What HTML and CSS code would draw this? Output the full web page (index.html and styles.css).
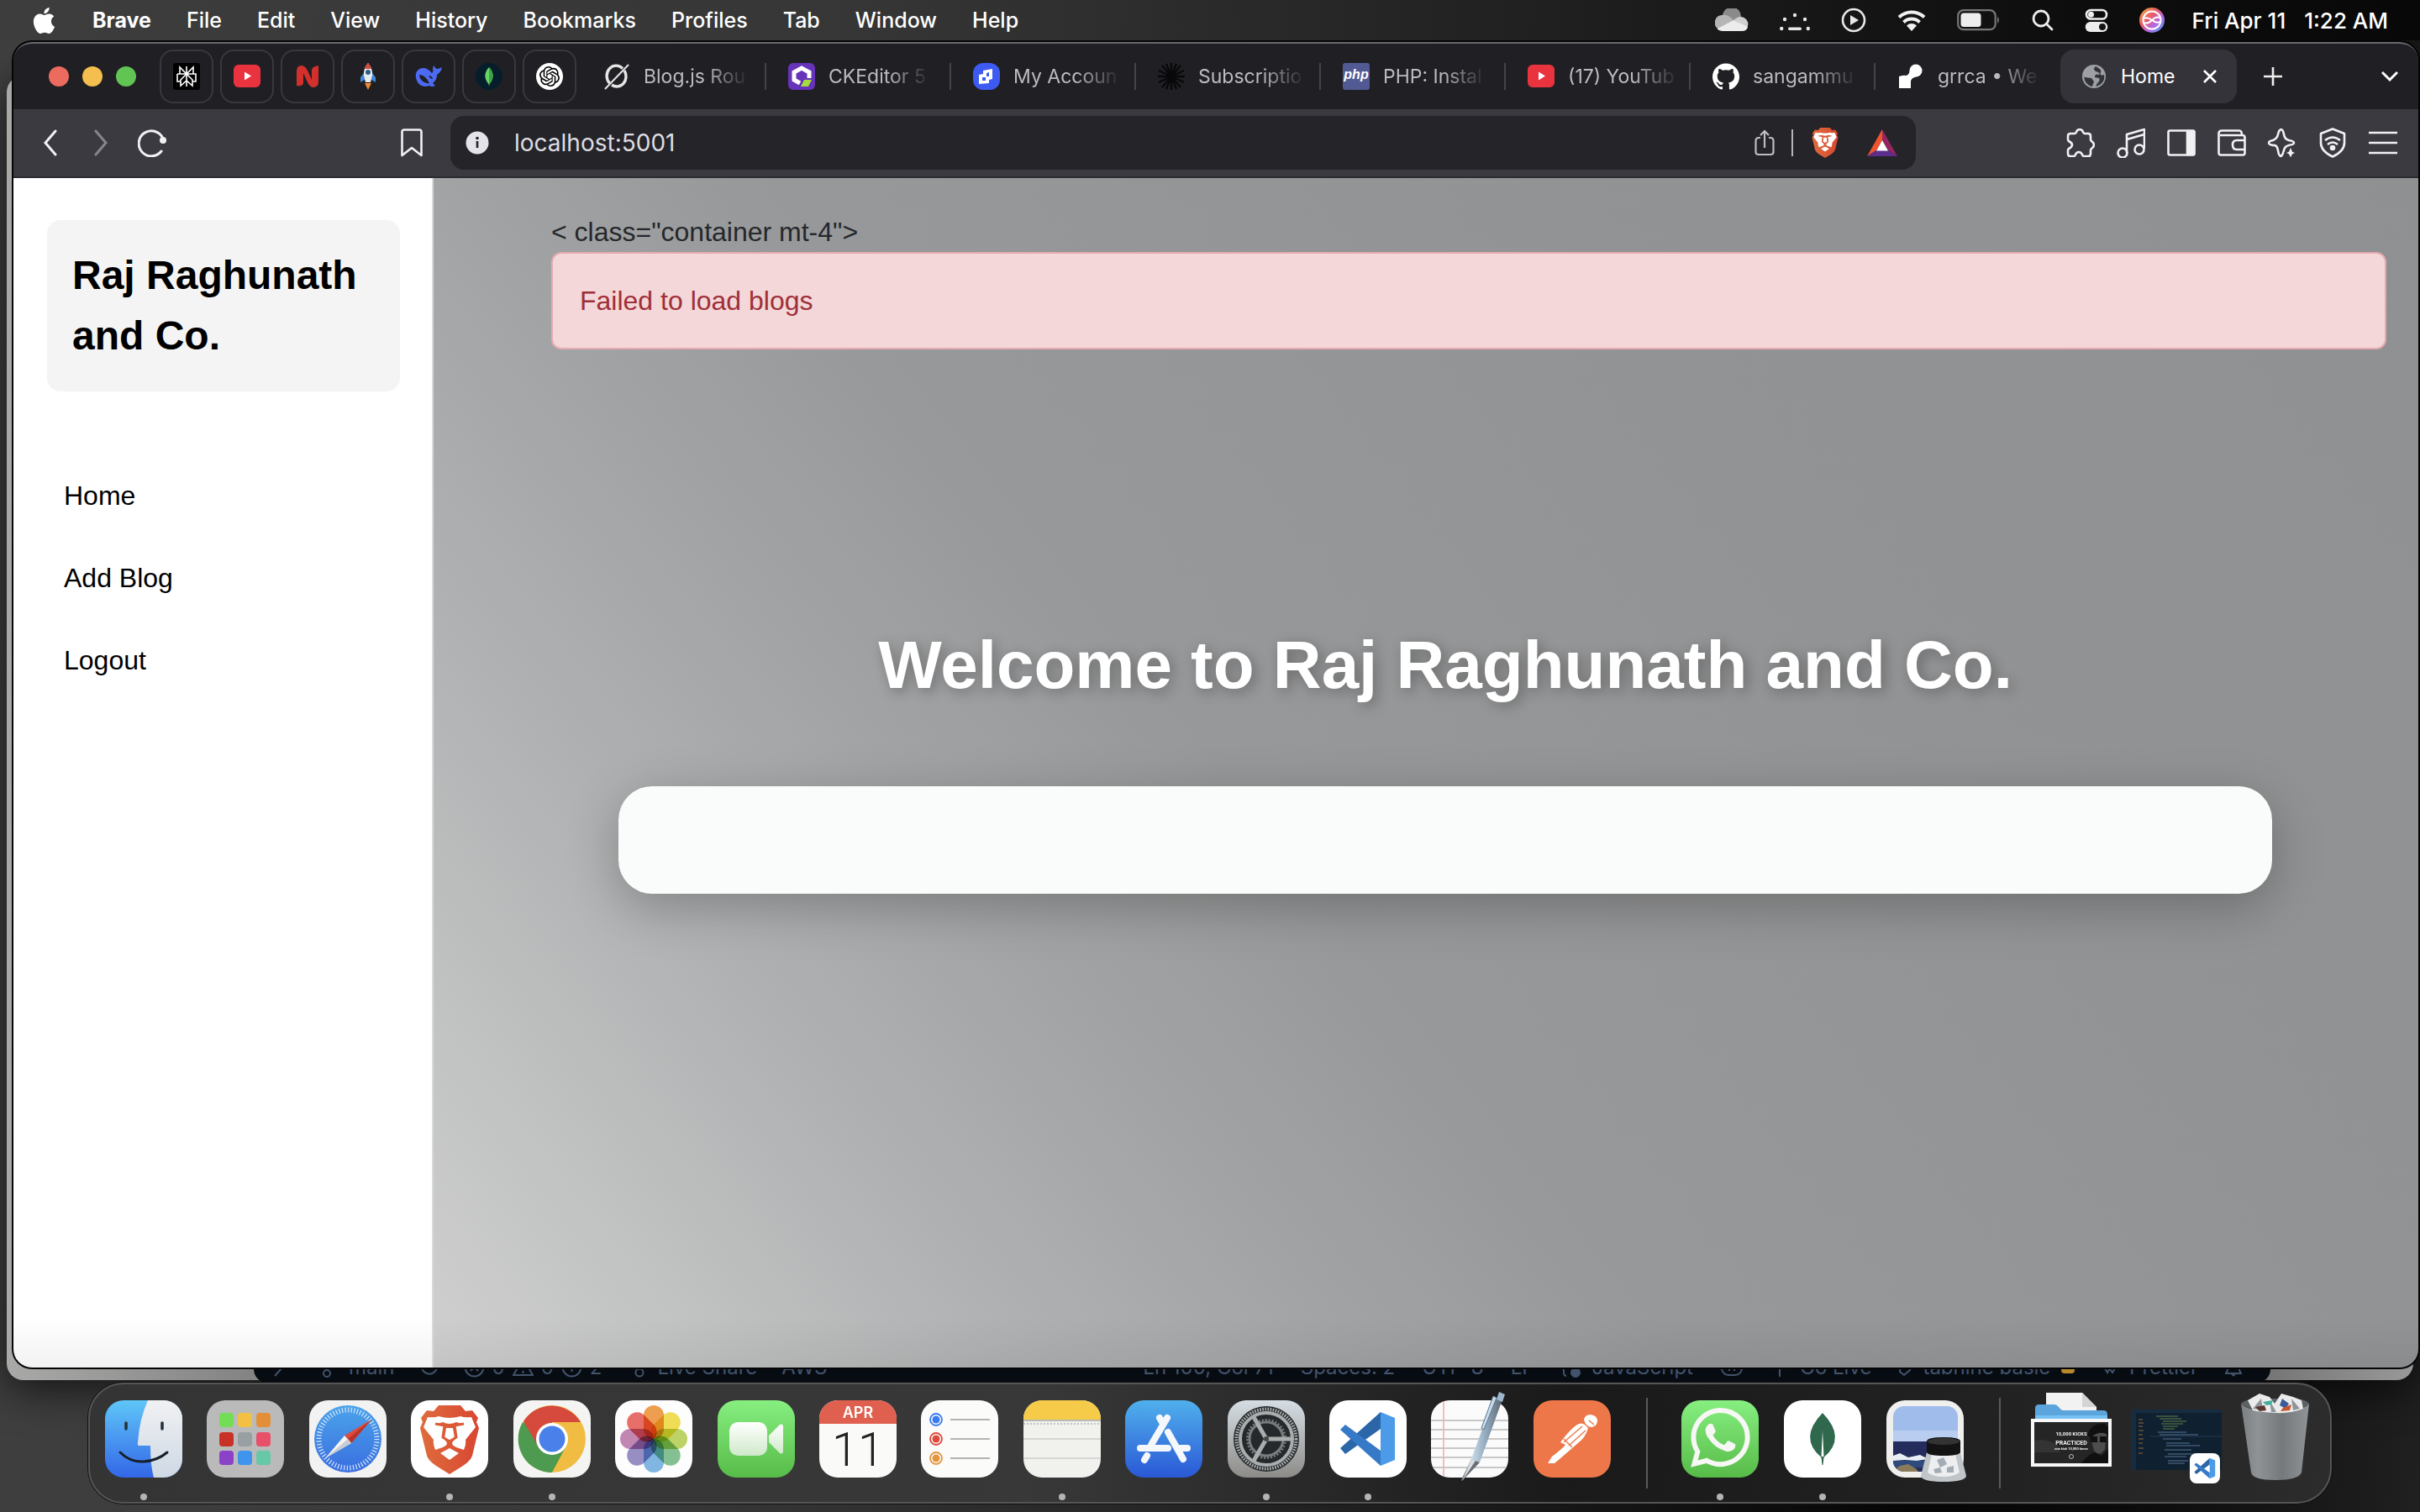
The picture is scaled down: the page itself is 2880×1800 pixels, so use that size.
FILE: index.html
```html
<!DOCTYPE html>
<html lang="en">
<head>
<meta charset="utf-8">
<title>Home</title>
<link rel="stylesheet" href="styles.css">
</head>
<body>
<svg class="defs" width="0" height="0" aria-hidden="true">
  <defs>
    <linearGradient id="g-blue" x1="0" y1="0" x2="0" y2="1"><stop offset="0" stop-color="#5fc6f8"/><stop offset="1" stop-color="#3367e8"/></linearGradient>
    <linearGradient id="g-pale" x1="0" y1="0" x2="0" y2="1"><stop offset="0" stop-color="#f1f1f4"/><stop offset="1" stop-color="#ced8e4"/></linearGradient>
    <linearGradient id="g-safari" x1="0" y1="0" x2="0" y2="1"><stop offset="0" stop-color="#4ba3ea"/><stop offset="1" stop-color="#3a6ee0"/></linearGradient>
    <linearGradient id="g-lion" x1="0" y1="0" x2="1" y2="0"><stop offset="0" stop-color="#de6c3c"/><stop offset=".5" stop-color="#dc5a37"/><stop offset="1" stop-color="#d84632"/></linearGradient>
    <linearGradient id="g-cam" x1="0" y1="0" x2="0" y2="1"><stop offset="0" stop-color="#ffffff"/><stop offset="1" stop-color="#cfe9ca"/></linearGradient>
    <linearGradient id="g-trash" x1="0" y1="0" x2="1" y2="0"><stop offset="0" stop-color="#7b8083"/><stop offset=".25" stop-color="#8f9396"/><stop offset=".6" stop-color="#75797c"/><stop offset="1" stop-color="#909497"/></linearGradient>
    <linearGradient id="g-siri" x1="0" y1="0" x2="1" y2="1"><stop offset="0" stop-color="#f3b13c"/><stop offset=".4" stop-color="#ea5a6a"/><stop offset=".65" stop-color="#b467e6"/><stop offset="1" stop-color="#3ea6ef"/></linearGradient>
    <linearGradient id="g-pen" x1="0" y1="0" x2="1" y2="0"><stop offset="0" stop-color="#c9dcea"/><stop offset=".5" stop-color="#8ea6ba"/><stop offset="1" stop-color="#5b6670"/></linearGradient>
    <symbol id="lion" viewBox="10 4 72 86">
      <path fill="url(#g-lion)" d="M33 6H59L65 13 73 12 80 21 78 26 81 33 73 66Q71 72 62 78L46 88 30 78Q21 72 19 66L11 33 14 26 12 21 19 12 27 13Z"/>
      <path fill="#fff" d="M20 20Q28 21 33 19Q46 23 59 19Q64 21 72 20L77 32 65 47Q66 52 63 59L54 56Q47 53 50 49L54 45 52 31 60 28 54 26Q46 30 38 26L32 28 40 31 38 45 42 49Q45 53 38 56L29 59Q26 52 27 47L15 32Z"/>
      <path fill="#fff" d="M42 33H50L52 45 46 48 40 45ZM46 57L57 63 46 71 35 63Z"/>
      <path fill="none" stroke="#dc5a37" stroke-width="3" d="M29 28L40 30 38 44 46 49 54 44 52 30 63 28M46 49V55"/>
    </symbol>
    <symbol id="vscode" viewBox="12 12 68 68">
      <path fill="#2a66a8" d="M13 57L61 14V34L19 64Z"/>
      <path fill="#3679c6" d="M13 35L19 29 61 60V78L13 35Z"/>
      <path fill="#4c9be8" d="M61 14L78 21V71L61 78Z"/>
    </symbol>
    <symbol id="youtube" viewBox="0 0 32 28">
      <rect width="32" height="27" rx="6" fill="#e9333f"/><path fill="#fff" d="M13 8.500L21 13.500 13 18.500Z"/>
    </symbol>
  </defs>
</svg>

<div class="desktop">
  <div class="back-window" aria-hidden="true"></div>

  <header class="menubar">
    <nav class="menus" aria-label="Menu bar">
      <button class="menu" aria-label="Apple menu"><svg width="31" height="31" viewBox="0 0 24 24"><path fill="#fff" d="M12.152 6.896c-.948 0-2.415-1.078-3.96-1.04-2.04.027-3.91 1.183-4.961 3.014-2.117 3.675-.546 9.103 1.519 12.09 1.013 1.454 2.208 3.09 3.792 3.039 1.52-.065 2.09-.987 3.935-.987 1.831 0 2.35.987 3.96.948 1.637-.026 2.676-1.48 3.676-2.948 1.156-1.688 1.636-3.325 1.662-3.415-.039-.013-3.182-1.221-3.22-4.857-.026-3.04 2.48-4.494 2.597-4.559-1.429-2.09-3.623-2.324-4.39-2.376-2-.156-3.675 1.09-4.61 1.09zM15.53 3.83c.843-1.012 1.4-2.427 1.245-3.83-1.207.052-2.662.805-3.532 1.818-.78.896-1.454 2.338-1.273 3.714 1.338.104 2.715-.688 3.559-1.701"/></svg></button>
      <button class="menu menu-app">Brave</button>
      <button class="menu">File</button>
      <button class="menu">Edit</button>
      <button class="menu">View</button>
      <button class="menu">History</button>
      <button class="menu">Bookmarks</button>
      <button class="menu">Profiles</button>
      <button class="menu">Tab</button>
      <button class="menu">Window</button>
      <button class="menu">Help</button>
    </nav>
    <div class="status">
      <svg width="40" height="28" viewBox="0 0 40 28"><path fill="#8a8a8a" d="M9 9A11 11 0 0 1 31 10L20 18Z"/><path fill="#b5b5b5" d="M2 23A9 9 0 0 1 8 8Q14 6 22 14L4 26Z"/><path fill="#cfcfcf" d="M22 14Q30 7 36 12A8 8 0 0 1 38 23Z"/><path fill="#ececec" d="M3 24L22 14 39 22Q38 27 32 27H9Q5 27 3 24Z"/></svg>
      <svg width="36" height="28" viewBox="0 0 36 28" fill="#e8e8e8"><circle cx="18" cy="8" r="2.200"/><circle cx="6" cy="13" r="2.200"/><circle cx="30" cy="13" r="2.200"/><circle cx="2.200" cy="24" r="2.200"/><circle cx="33.800" cy="24" r="2.200"/><rect x="10" y="22.500" width="16" height="3.500" rx="1.700"/></svg>
      <svg width="30" height="30" viewBox="0 0 30 30"><circle cx="15" cy="15" r="13" fill="none" stroke="#e8e8e8" stroke-width="2.600"/><path fill="#e8e8e8" d="M11 9L21 15 11 21Z"/></svg>
      <svg width="34" height="26" viewBox="0 0 34 26" fill="none" stroke="#f0f0f0" stroke-width="4"><path d="M2 9.500A21.500 21.500 0 0 1 32 9.500M7.500 15.500A13.500 13.500 0 0 1 26.500 15.500"/><path fill="#f0f0f0" stroke="none" d="M17 26L11 19.500A8.500 8.500 0 0 1 23 19.500Z"/></svg>
      <svg width="52" height="26" viewBox="0 0 52 26"><rect x="1.200" y="1.200" width="44.500" height="23" rx="6.500" fill="none" stroke="#777" stroke-width="2.200"/><rect x="4.500" y="4.500" width="24" height="16.500" rx="3.500" fill="#eee"/><path fill="#777" d="M48 9Q52 12.500 48 17Z"/></svg>
      <svg width="26" height="26" viewBox="0 0 26 26" fill="none" stroke="#eee" stroke-width="2.800" stroke-linecap="round"><circle cx="11" cy="11" r="9"/><path d="M17.500 17.500L24 24"/></svg>
      <svg width="28" height="28" viewBox="0 0 28 28"><rect x="2" y="2" width="24" height="10.500" rx="5.200" fill="none" stroke="#eee" stroke-width="2.600"/><circle cx="7.500" cy="7.200" r="3.500" fill="#eee"/><rect x=".7" y="16" width="26.600" height="12" rx="6" fill="#eee"/><circle cx="21" cy="22" r="4" fill="#151515"/></svg>
      <svg width="30" height="30" viewBox="0 0 30 30"><circle cx="15" cy="15" r="15" fill="url(#g-siri)"/><circle cx="15" cy="15" r="10.500" fill="none" stroke="#fff" stroke-width="2"/><path fill="none" stroke="#fff" stroke-width="2" d="M5 13Q10 11 15 15T25 17M5 18Q10 20 15 15T24 12"/></svg>
      <time class="clock"><span>Fri Apr 11</span><span>1:22 AM</span></time>
    </div>
  </header>

  <div class="browser">
    <div class="tabstrip">
      <div class="lights">
        <button class="light light-close" aria-label="Close"></button>
        <button class="light light-min" aria-label="Minimize"></button>
        <button class="light light-max" aria-label="Zoom"></button>
      </div>
      <div class="pinned">
        <button class="pin" aria-label="Perplexity"><svg width="32" height="32" viewBox="0 0 32 32"><rect width="32" height="32" rx="3" fill="#000"/><path fill="none" stroke="#fff" stroke-width="1.600" d="M16 4V28M8 5L16 13 24 5V13H8ZM5 13H27V22H23M5 13V22H9M16 13L9 20V27L16 21 23 27V20L16 13"/></svg></button>
        <button class="pin" aria-label="YouTube"><svg width="32" height="28"><use href="#youtube"/></svg></button>
        <button class="pin" aria-label="Novel"><svg width="28" height="28" viewBox="0 0 28 28"><path fill="#d3302c" d="M1 25V8Q1 1 7 1Q11 1 14 7L19 18V6Q20 2 27 1V20Q27 27 21 27Q17 27 14 21L9 10V22Q8 26 1 25Z"/></svg></button>
        <button class="pin" aria-label="Rocket"><svg width="20" height="32" viewBox="0 0 20 32"><path fill="#3f8ad8" d="M5 12L1 17V23L6 20ZM15 12L19 17V23L14 20Z"/><path fill="#e6ebee" d="M10 0Q16 7 15 15L13 23H7L5 15Q4 7 10 0Z"/><path fill="#d64a3b" d="M10 0Q13 3 14 7H6Q7 3 10 0Z"/><circle cx="10" cy="11" r="3" fill="#2f5d86"/><path fill="#f08b33" d="M6 24H14L10 32Z"/></svg></button>
        <button class="pin" aria-label="DeepSeek"><svg width="32" height="26" viewBox="0 0 32 26"><path fill="#4d6bf2" d="M1 9Q4 2 11 3Q16 4 20 9Q22 8 21 4Q21 1 23 0Q23 3 26 4Q29 4 32 2Q31 8 26 11Q26 17 21 21L24 24Q20 26 17 24Q8 27 3 20Q0 15 1 9Z"/><path fill="#201f24" d="M5 11Q12 11 17 21Q12 22 8 18Q5 15 5 11ZM16 12Q20 12 21 16Q18 16 16 12Z"/></svg></button>
        <button class="pin" aria-label="MongoDB"><svg width="32" height="32" viewBox="0 0 32 32"><circle cx="16" cy="16" r="16" fill="#061e2b"/><path fill="#63d964" d="M16 5Q25 15 16.500 25L16 28 15.500 25Q7 15 16 5Z"/><path fill="#42a147" d="M16 5Q25 15 16 25Z"/></svg></button>
        <button class="pin" aria-label="ChatGPT"><svg width="32" height="32" viewBox="-4 -4 32 32"><circle cx="12" cy="12" r="16" fill="#fff"/><path d="M22.282 9.821a5.985 5.985 0 0 0-.516-4.910 6.046 6.046 0 0 0-6.510-2.900A6.065 6.065 0 0 0 4.981 4.182a5.985 5.985 0 0 0-3.998 2.900 6.046 6.046 0 0 0 .743 7.097 5.980 5.980 0 0 0 .511 4.911 6.051 6.051 0 0 0 6.515 2.900A5.985 5.985 0 0 0 13.260 24a6.056 6.056 0 0 0 5.772-4.206 5.989 5.989 0 0 0 3.998-2.900 6.056 6.056 0 0 0-.748-7.073zm-9.022 12.608a4.476 4.476 0 0 1-2.876-1.041l.142-.08 4.778-2.758a.795.795 0 0 0 .393-.681v-6.737l2.020 1.169a.071.071 0 0 1 .038.052v5.583a4.504 4.504 0 0 1-4.495 4.494zm-9.661-4.125a4.471 4.471 0 0 1-.535-3.014l.142.085 4.783 2.758a.771.771 0 0 0 .781 0l5.843-3.369v2.332a.08.08 0 0 1-.033.062L9.740 19.950a4.499 4.499 0 0 1-6.141-1.646zM2.341 7.896a4.485 4.485 0 0 1 2.366-1.973V11.600a.766.766 0 0 0 .388.677l5.814 3.354-2.020 1.169a.076.076 0 0 1-.071 0l-4.830-2.787A4.504 4.504 0 0 1 2.341 7.872zm16.596 3.856L13.104 8.364 15.119 7.200a.076.076 0 0 1 .071 0l4.830 2.791a4.494 4.494 0 0 1-.677 8.104v-5.677a.790.790 0 0 0-.407-.667zm2.011-3.023l-.142-.085-4.774-2.782a.776.776 0 0 0-.785 0L9.409 9.230V6.897a.066.066 0 0 1 .028-.062l4.830-2.787a4.499 4.499 0 0 1 6.680 4.660zM8.307 12.863l-2.020-1.164a.08.08 0 0 1-.038-.057V6.074a4.499 4.499 0 0 1 7.376-3.454l-.142.081L8.704 5.459a.795.795 0 0 0-.393.681zm1.098-2.365l2.602-1.500 2.607 1.500v2.999l-2.597 1.500-2.607-1.500Z"/></svg></button>
      </div>
      <div class="tabs">
        <button class="tab"><svg width="32" height="32" viewBox="0 0 32 32"><path fill="none" stroke="#e6e6e6" stroke-width="3.400" d="M23 6.500A11 12 0 0 0 7.500 24M10 26A11 12 0 0 0 25 9"/><path stroke="#e6e6e6" stroke-width="2" d="M30 2L2 31"/></svg><span class="tab-title">Blog.js Rou</span></button>
        <button class="tab"><svg width="32" height="32" viewBox="0 0 32 32"><rect width="32" height="32" rx="6" fill="#6633b9"/><path fill="none" stroke="#fff" stroke-width="5" d="M14 24L7 20V11L16 6 25 11V18"/><path fill="#a5dc3d" d="M19 20H28L24 28H15Z"/></svg><span class="tab-title">CKEditor 5</span></button>
        <button class="tab"><svg width="32" height="32" viewBox="0 0 32 32"><rect width="32" height="32" rx="12" fill="#3d5bf2"/><path fill="#fff" d="M12 9L23 7V19L19 20V24L7 25V14L12 13ZM16 12V16H19V11ZM11 17V21H15V17Z" fill-rule="evenodd"/></svg><span class="tab-title">My Accoun</span></button>
        <button class="tab"><svg width="32" height="32" viewBox="0 0 32 32"><path fill="none" stroke="#08080a" stroke-width="2.400" d="M16 0V32M0 16H32M5 3L16 16 27 3M5 29L16 16 27 29M1 9L16 16 31 9M1 23L16 16 31 23M10 1L16 16 22 1M10 31L16 16 22 31"/></svg><span class="tab-title">Subscriptio</span></button>
        <button class="tab"><span class="php-badge" aria-hidden="true">php</span><span class="tab-title">PHP: Instal</span></button>
        <button class="tab"><svg width="32" height="28"><use href="#youtube"/></svg><span class="tab-title">(17) YouTub</span></button>
        <button class="tab"><svg width="32" height="32" viewBox="0 0 24 24"><path fill="#fff" d="M12 .297c-6.630 0-12 5.373-12 12 0 5.303 3.438 9.800 8.205 11.385.6.113.82-.258.82-.577 0-.285-.01-1.040-.015-2.040-3.338.724-4.042-1.610-4.042-1.610C4.422 18.070 3.633 17.700 3.633 17.700c-1.087-.744.084-.729.084-.729 1.205.084 1.838 1.236 1.838 1.236 1.070 1.835 2.809 1.305 3.495.998.108-.776.417-1.305.76-1.605-2.665-.3-5.466-1.332-5.466-5.930 0-1.310.465-2.380 1.235-3.220-.135-.303-.54-1.523.105-3.176 0 0 1.005-.322 3.300 1.230.96-.267 1.980-.399 3-.405 1.020.006 2.040.138 3 .405 2.280-1.552 3.285-1.230 3.285-1.230.645 1.653.24 2.873.12 3.176.765.84 1.230 1.910 1.230 3.220 0 4.610-2.805 5.625-5.475 5.920.42.36.81 1.096.81 2.220 0 1.606-.015 2.896-.015 3.286 0 .315.21.69.825.57C20.565 22.092 24 17.592 24 12.297c0-6.627-5.373-12-12-12"/></svg><span class="tab-title">sangammu</span></button>
        <button class="tab"><svg width="32" height="32" viewBox="0 0 32 32"><circle cx="22" cy="9" r="7.500" fill="#fff"/><path fill="#fff" d="M2 16Q8 14 10 15Q14 15 15 8L23 16Q16 18 16 22V30H2Z"/></svg><span class="tab-title">grrca • We</span></button>
        <div class="tab-active">
          <svg width="28" height="28" viewBox="0 0 28 28"><circle cx="14" cy="14" r="14" fill="#9ca0a5"/><path fill="#34333a" d="M16 2Q12 5 16 8Q22 9 20 12Q15 10 15 15L20 16Q22 19 18 22L16 26Q28 22 26 12Q20 14 22 9Q24 6 16 2ZM3 15L11 16 14 20 12 26Q3 24 2 14Z"/></svg>
          <span class="tab-name">Home</span>
          <button class="icon-btn tab-close" aria-label="Close tab"><svg width="16" height="16" viewBox="0 0 16 16" stroke="#fff" stroke-width="2.600"><path d="M1 1L15 15M15 1L1 15"/></svg></button>
        </div>
        <button class="icon-btn new-tab" aria-label="New tab"><svg width="22" height="22" viewBox="0 0 22 22" stroke="#eee" stroke-width="2.600"><path d="M11 0V22M0 11H22"/></svg></button>
      </div>
      <button class="icon-btn tab-search" aria-label="Search tabs"><svg width="20" height="14" viewBox="0 0 20 14" fill="none" stroke="#fff" stroke-width="3"><path d="M1 2L10 11 19 2"/></svg></button>
    </div>

    <div class="toolbar">
      <div class="nav-buttons">
        <button class="icon-btn" aria-label="Back"><svg width="16" height="32" viewBox="0 0 16 32" fill="none" stroke="#f1f1f4" stroke-width="3" stroke-linecap="round"><path d="M14 2L2 16 14 30"/></svg></button>
        <button class="icon-btn" aria-label="Forward"><svg width="16" height="32" viewBox="0 0 16 32" fill="none" stroke="#85858a" stroke-width="3" stroke-linecap="round"><path d="M2 2L14 16 2 30"/></svg></button>
        <button class="icon-btn" aria-label="Reload"><svg width="34" height="34" viewBox="0 0 34 34" fill="none" stroke="#f1f1f4" stroke-width="3" stroke-linecap="round"><path d="M30 12A15 15 0 1 0 28 27"/><circle cx="30" cy="14" r="4" fill="#f1f1f4" stroke="none"/></svg></button>
      </div>
      <button class="icon-btn" aria-label="Bookmark"><svg width="26" height="34" viewBox="0 0 26 34" fill="none" stroke="#f1f1f4" stroke-width="2.600" stroke-linejoin="round"><path d="M4 1.500H22Q24.500 1.500 24.500 4V32L13 23 1.500 32V4Q1.500 1.500 4 1.500Z"/></svg></button>
      <div class="urlbar">
        <svg width="28" height="28" viewBox="0 0 28 28"><circle cx="14" cy="14" r="13.500" fill="#e4e3e9"/><circle cx="14" cy="8.500" r="1.800" fill="#252429"/><path stroke="#252429" stroke-width="2.600" d="M14 12V20"/></svg>
        <input class="url" type="text" aria-label="Address" value="localhost:5001">
        <button class="icon-btn" aria-label="Share"><svg width="24" height="32" viewBox="0 0 24 32" fill="none" stroke="#bdbcc3" stroke-width="2.200"><path d="M7 10H5Q1.500 10 1.500 14V27Q1.500 30 5 30H19Q22.500 30 22.500 27V14Q22.500 10 19 10H17M12 22V2M7 7L12 2 17 7"/></svg></button>
        <span class="url-divider"></span>
        <button class="icon-btn" aria-label="Brave Shields"><svg width="32" height="38"><use href="#lion"/></svg></button>
        <button class="icon-btn" aria-label="Brave Rewards"><svg width="36" height="32" viewBox="0 0 36 32"><path fill="#f0542f" d="M18 0L0 32 11 25 18 13Z"/><path fill="#93265f" d="M18 0L36 32 25 25 18 13Z"/><path fill="#5d2d8e" d="M0 32H36L25 25H11Z"/><path fill="#fff" d="M18 13L25 25.500H11Z"/></svg></button>
      </div>
      <div class="tools">
        <button class="icon-btn" aria-label="Extensions"><svg width="34" height="34" viewBox="0 0 34 34"><path d="M5 6H10Q11 6 11.500 5Q13 1 16 1T20.500 5Q21 6 22 6H26Q29 6 29 9V13Q29 14 30 15Q33 17 33 19.500T30 24Q29 25 29 26V30Q29 33 26 33H21Q20 33 19.500 32Q18 28 15 28T10.500 32Q10 33 9 33H5Q2 33 2 30V26Q2 25 3 24Q7 22 7 19.500T3 15Q2 14 2 13V9Q2 6 5 6Z"/></svg></button>
        <button class="icon-btn" aria-label="Playlist"><svg width="34" height="36" viewBox="0 0 34 36"><path d="M12 30V8L33 2V25M12 14L33 8"/><circle cx="7" cy="30" r="5.500"/><circle cx="27" cy="26" r="5.500"/></svg></button>
        <button class="icon-btn" aria-label="Sidebar"><svg width="34" height="32" viewBox="0 0 34 32"><rect x="1.500" y="1.500" width="31" height="29" rx="2"/><path fill="#f1f1f4" d="M24 2H32V30H24Z"/></svg></button>
        <button class="icon-btn" aria-label="Wallet"><svg width="34" height="32" viewBox="0 0 34 32"><path d="M1.500 4V28Q1.500 30.500 4 30.500H30Q32.500 30.500 32.500 28V10Q32.500 7 30 7H3M1.500 5Q1.500 1.500 5 1.500H26Q29 1.500 29 7M33 13H23Q18 13 18 18.500T23 24H33"/></svg></button>
        <button class="icon-btn" aria-label="Leo AI"><svg width="34" height="36" viewBox="0 0 34 36"><path d="M15.500 2Q18 2 19 8T25 15Q31 16 31 18T25 21Q20 22 19 27T15.500 34Q13 34 12 27T6 21Q1 20 1 18T6 15Q11 13 12 8T15.500 2Z"/><path fill="#f1f1f4" stroke="#3b3a40" stroke-width="1.500" d="M27 22L29.500 28 34 30 29.500 32 27 37 24.500 32 20 30 24.500 28Z"/></svg></button>
        <button class="icon-btn" aria-label="VPN"><svg width="32" height="36" viewBox="0 0 32 36"><path d="M16 1.500L30 7V18Q30 28 16 34.500Q2 28 2 18V7ZM7 15Q16 8 25 15M10 20Q16 15 22 20"/><circle cx="16" cy="24" r="2" fill="#f1f1f4"/></svg></button>
        <button class="icon-btn" aria-label="Menu"><svg width="34" height="28" viewBox="0 0 34 28"><path d="M0 2H34M0 14H34M0 26H34"/></svg></button>
      </div>
    </div>

    <div class="page">
      <aside class="sidebar">
        <h2 class="brand">Raj Raghunath and Co.</h2>
        <nav class="links">
          <a href="#">Home</a>
          <a href="#">Add Blog</a>
          <a href="#">Logout</a>
        </nav>
      </aside>
      <main class="main">
        <div class="stray">&lt; class="container mt-4"&gt;</div>
        <div class="alert" role="alert">Failed to load blogs</div>
        <section class="hero">
          <h1 class="hero-title">Welcome to Raj Raghunath and Co.</h1>
          <div class="card"></div>
        </section>
      </main>
    </div>
  </div>

  <div class="editor-bar">
    <div class="editor-group">
      <svg class="ed-remote" width="18" height="24" viewBox="0 0 18 24"><path d="M1 23L10 13 3 5M10 5L17 13"/></svg>
      <span class="ed-item"><svg width="18" height="28" viewBox="0 0 18 28"><circle cx="5" cy="22" r="4"/><circle cx="14" cy="6" r="3"/><path d="M5 18V4M14 9Q14 14 5 15"/></svg>main</span>
      <svg width="24" height="24" viewBox="0 0 24 24"><path d="M3 10A9 9 0 0 0 21 13M0 12L3 8 7 12M17 13L21 9 24 13"/></svg>
      <span class="ed-counts"><svg width="25" height="25" viewBox="0 0 25 25"><circle cx="12.500" cy="12.500" r="11"/><path d="M8 8L17 17M17 8L8 17"/></svg>0 <svg width="25" height="24" viewBox="0 0 25 24"><path d="M12.500 2L24 22H1ZM12.500 9V15M12.500 17V20"/></svg>0 <svg width="25" height="25" viewBox="0 0 25 25"><circle cx="12.500" cy="12.500" r="11"/><path d="M12.500 6V18"/></svg>2</span>
      <span class="ed-item"><svg width="24" height="26" viewBox="0 0 24 26"><circle cx="16" cy="20" r="4.500"/><path d="M1 16Q2 6 10 6M12 12L20 6 23 14"/></svg>Live Share</span>
      <span>AWS</span>
    </div>
    <div class="editor-group">
      <span>Ln 100, Col 71</span>
      <span>Spaces: 2</span>
      <span>UTF-8</span>
      <span>LF</span>
      <span class="ed-item"><svg width="24" height="26" viewBox="0 0 24 26"><path d="M6 2Q3 2 3 8T1 13Q4 14 4 19T7 24"/><circle cx="18" cy="20" r="5" fill="#42536b"/></svg>JavaScript</span>
      <svg width="28" height="26" viewBox="0 0 28 26"><rect x="2" y="6" width="24" height="17" rx="8"/><path d="M11 13V18M17 13V18"/></svg>
      <span class="ed-item"><svg width="22" height="26" viewBox="0 0 22 26"><path d="M11 10V25M5 16Q1 10 5 4M17 16Q21 10 17 4"/></svg>Go Live</span>
      <span class="ed-item"><svg width="16" height="24" viewBox="0 0 16 24"><path d="M2 4V18L7 22 14 16V4"/></svg>tabnine basic<svg width="16" height="22" viewBox="0 0 16 22"><rect x="0" y="4" width="16" height="15" rx="4" fill="#b98a2b" stroke="none"/></svg></span>
      <span class="ed-item"><svg width="20" height="22" viewBox="0 0 20 22"><path d="M1 8L7 18 12 9M10 14L13 18 19 8"/></svg>Prettier</span>
      <svg width="20" height="26" viewBox="0 0 20 26"><path d="M1 21H19L17 17V9Q16 3 10 3T3 9V17ZM8 21Q10 26 12 21"/></svg>
    </div>
  </div>

  <div class="dock">
    <div class="dock-apps">
      <button class="app running" aria-label="Finder"><svg class="tile" viewBox="0 0 92 92"><rect width="92" height="92" fill="url(#g-blue)"/><path fill="url(#g-pale)" d="M51 0H92V92H58Q54 78 54 54H41Q38 54 39 50Q41 22 51 0Z"/><path fill="none" stroke="#26323e" stroke-width="3.600" stroke-linecap="round" d="M25 27V34M68 27V34"/><path fill="none" stroke="#16202a" stroke-width="3" stroke-linecap="round" d="M18 62Q30 74 46 73T74 62"/></svg></button>
      <button class="app" aria-label="Launchpad"><svg class="tile" viewBox="0 0 92 92"><rect width="92" height="92" fill="#b9bab9"/><g><rect x="15" y="15" width="17" height="17" rx="4" fill="#72dd55"/><rect x="37" y="15" width="17" height="17" rx="4" fill="#f2c143"/><rect x="59" y="15" width="17" height="17" rx="4" fill="#e38f3a"/><rect x="15" y="38" width="17" height="17" rx="4" fill="#c83226"/><rect x="37" y="38" width="17" height="17" rx="4" fill="#99a0a4"/><rect x="59" y="38" width="17" height="17" rx="4" fill="#e8506a"/><rect x="15" y="60" width="17" height="17" rx="4" fill="#8c42c8"/><rect x="37" y="60" width="17" height="17" rx="4" fill="#3f94ee"/><rect x="59" y="60" width="17" height="17" rx="4" fill="#66c8a6"/></g></svg></button>
      <button class="app" aria-label="Safari"><svg class="tile" viewBox="0 0 92 92"><rect width="92" height="92" fill="#f2f2f2"/><circle cx="46" cy="46" r="40" fill="url(#g-safari)"/><circle cx="46" cy="46" r="34.500" fill="none" stroke="#d5e6fa" stroke-width="6" stroke-dasharray="1.200 2.410"/><path fill="#e04a3a" d="M74 23L50 51 42 42Z"/><path fill="#b93329" d="M74 23L50 51 46 46Z"/><path fill="#f4f4f4" d="M19 69L42 42 50 51Z"/><path fill="#c9ccd0" d="M19 69L50 51 46 46Z"/></svg></button>
      <button class="app running" aria-label="Brave"><svg class="tile" viewBox="0 0 92 92"><rect width="92" height="92" fill="#fff"/><use href="#lion" x="10" y="4" width="72" height="86"/></svg></button>
      <button class="app running" aria-label="Chrome"><svg class="tile" viewBox="0 0 92 92"><rect width="92" height="92" fill="#f4f4f3"/><circle cx="46" cy="46" r="40" fill="#f0bc42"/><path fill="#4d9a50" d="M46 46L62.500 55 46 86A40 40 0 0 1 11 26Z"/><path fill="#d54a3c" d="M80 26A40 40 0 0 0 12 25L30 56 46 26Z"/><circle cx="46" cy="46" r="19" fill="#fff"/><circle cx="46" cy="46" r="15.500" fill="#4a80ea"/></svg></button>
      <button class="app" aria-label="Photos"><svg class="tile" viewBox="0 0 92 92"><rect width="92" height="92" fill="#fdfdfd"/><g class="petals"><rect x="34" y="6" width="24" height="40" rx="12" fill="#ee963c"/><rect x="34" y="6" width="24" height="40" rx="12" fill="#efdc43" transform="rotate(45 46 46)"/><rect x="34" y="6" width="24" height="40" rx="12" fill="#b9d157" transform="rotate(90 46 46)"/><rect x="34" y="6" width="24" height="40" rx="12" fill="#78bb86" transform="rotate(135 46 46)"/><rect x="34" y="6" width="24" height="40" rx="12" fill="#74b0e2" transform="rotate(180 46 46)"/><rect x="34" y="6" width="24" height="40" rx="12" fill="#8d84bf" transform="rotate(225 46 46)"/><rect x="34" y="6" width="24" height="40" rx="12" fill="#bd7bac" transform="rotate(270 46 46)"/><rect x="34" y="6" width="24" height="40" rx="12" fill="#e6605a" transform="rotate(315 46 46)"/></g></svg></button>
      <button class="app" aria-label="FaceTime"><svg class="tile tile-green" viewBox="0 0 92 92"><rect x="14" y="26" width="45" height="40" rx="10" fill="url(#g-cam)"/><path fill="url(#g-cam)" d="M61 42L74 29Q78 27 78 32V60Q78 65 74 63L61 50Z"/></svg></button>
      <button class="app" aria-label="Calendar"><span class="tile calendar"><span class="cal-month">APR</span><span class="cal-day">11</span></span></button>
      <button class="app" aria-label="Reminders"><svg class="tile" viewBox="0 0 92 92"><rect width="92" height="92" fill="#fbfbfa"/><g fill="none" stroke-width="1.800"><circle cx="18" cy="23" r="7" stroke="#3a7bf0"/><circle cx="18" cy="46" r="7" stroke="#dc4a3c"/><circle cx="18" cy="69" r="7" stroke="#e2953c"/></g><circle cx="18" cy="23" r="4.500" fill="#3a7bf0"/><circle cx="18" cy="46" r="4.500" fill="#dc4a3c"/><circle cx="18" cy="69" r="4.500" fill="#e2953c"/><path stroke="#b3b3b5" stroke-width="2" d="M35 23H82M35 46H82M35 69H82"/></svg></button>
      <button class="app running" aria-label="Notes"><svg class="tile" viewBox="0 0 92 92"><rect width="92" height="92" fill="#f1f1ee"/><rect width="92" height="23" fill="#f6cb4a"/><path stroke="#b9b9b6" stroke-width="2" d="M0 24H92"/><path stroke="#c2c2c0" stroke-width="2" stroke-dasharray="2 2" d="M0 28H92"/><path stroke="#d6d6d4" stroke-width="2" d="M0 46H92M0 69H92"/></svg></button>
      <button class="app" aria-label="App Store"><svg class="tile tile-store" viewBox="0 0 92 92" fill="none" stroke="#f4f8fd" stroke-width="8" stroke-linecap="round"><path d="M50 21L31 53M41 21L44 26M51 38L69 70M18 57H51M66 57H74M26 66L23 71"/></svg></button>
      <button class="app running" aria-label="System Settings"><svg class="tile tile-gear" viewBox="0 0 92 92"><circle cx="46" cy="46" r="39" fill="#25292b"/><g fill="none" stroke="#a9adae"><circle cx="46" cy="46" r="35.500" stroke-width="4" stroke-dasharray="1.700 1.420"/><circle cx="46" cy="46" r="31" stroke-width="4"/><circle cx="46" cy="46" r="20" stroke-width="3" stroke="#777c7e"/><circle cx="46" cy="46" r="22.500" stroke-width="3" stroke="#777c7e" stroke-dasharray="2 2"/><path stroke-width="5" d="M46 46H76M46 46L31 20M46 46L31 72"/></g><circle cx="46" cy="46" r="3" fill="#444"/></svg></button>
      <button class="app running" aria-label="Visual Studio Code"><svg class="tile" viewBox="0 0 92 92"><rect width="92" height="92" fill="#fff"/><use href="#vscode" x="12" y="12" width="68" height="68"/></svg></button>
      <button class="app" aria-label="TextEdit"><svg class="tile" viewBox="0 0 92 92"><rect width="92" height="92" fill="#fbfbfb"/><path stroke="#b8b8b8" stroke-width="1.600" d="M0 24H92M0 35H92M0 46H92M0 57H92M0 68H92M0 80H92"/><path stroke="#eab3b0" stroke-width="1.600" d="M15 0V92"/></svg><svg class="pen" width="60" height="108" viewBox="0 0 60 108"><path fill="url(#g-pen)" d="M43 6L53 9 26 84 16 80Z"/><path fill="#9db7cd" d="M49 0L56 3 53 12 46 9Z"/><path fill="#c7dcee" stroke="#5f7485" d="M42 5L46 7 31 45 28 43Z"/><path fill="#6a6f76" d="M16 80L26 84 5 106 4 105Z"/><path fill="#d9dde1" d="M16 80L21 82 5 106Z"/></svg></button>
      <button class="app" aria-label="Postman"><svg class="tile" viewBox="0 0 92 92"><rect width="92" height="92" fill="#ed7748"/><path fill="#fff" d="M60 23Q61 17 68 17Q76 18 76 25Q75 32 68 32Q62 31 60 23Z"/><path fill="#fff" d="M61 29L65 33Q62 44 54 50L46 57 31 70 25 75H17L22 67Q34 58 38 53L32 50Q44 34 52 29Q57 26 61 29Z"/><path fill="none" stroke="#ed7748" stroke-width="1.400" d="M36 50L58 31M46 56L36 46M62 36L42 54M66 24L72 29"/></svg></button>
    </div>
    <span class="dock-divider"></span>
    <div class="dock-apps dock-recent">
      <button class="app running" aria-label="WhatsApp"><svg class="tile tile-green" viewBox="0 0 92 92"><g transform="translate(11 9) scale(2.950)"><path fill="#f7f7f5" d="M17.472 14.382c-.297-.149-1.758-.867-2.030-.967-.273-.099-.471-.148-.67.15-.197.297-.767.966-.94 1.164-.173.199-.347.223-.644.075-.297-.15-1.255-.463-2.390-1.475-.883-.788-1.480-1.761-1.653-2.059-.173-.297-.018-.458.13-.606.134-.133.298-.347.446-.52.149-.174.198-.298.298-.497.099-.198.05-.371-.025-.52-.075-.149-.669-1.612-.916-2.207-.242-.579-.487-.5-.669-.51-.173-.008-.371-.01-.57-.01-.198 0-.52.074-.792.372-.272.297-1.040 1.016-1.040 2.479 0 1.462 1.065 2.875 1.213 3.074.149.198 2.096 3.200 5.077 4.487.709.306 1.262.489 1.694.625.712.227 1.360.195 1.871.118.571-.085 1.758-.719 2.006-1.413.248-.694.248-1.289.173-1.413-.074-.124-.272-.198-.57-.347m-5.421 7.403h-.004a9.870 9.870 0 01-5.031-1.378l-.361-.214-3.741.982.998-3.648-.235-.374a9.860 9.860 0 01-1.510-5.260c.001-5.450 4.436-9.884 9.888-9.884 2.640 0 5.122 1.030 6.988 2.898a9.825 9.825 0 012.893 6.994c-.003 5.450-4.437 9.884-9.885 9.884m8.413-18.297A11.815 11.815 0 0012.050 0C5.495 0 .16 5.335.157 11.892c0 2.096.547 4.142 1.588 5.945L.057 24l6.305-1.654a11.882 11.882 0 005.683 1.448h.005c6.554 0 11.890-5.335 11.893-11.893a11.821 11.821 0 00-3.480-8.413Z"/></g></svg></button>
      <button class="app running" aria-label="MongoDB Compass"><svg class="tile" viewBox="0 0 92 92"><rect width="92" height="92" fill="#fff"/><path fill="#2f684c" d="M46 15Q75 45 47.500 68L46.500 77H45.500L44.500 68Q17 45 46 15Z"/><path fill="#fff" d="M46 36L47.500 67H44.500Z"/></svg></button>
      <button class="app" aria-label="Preview"><svg class="tile" viewBox="0 0 92 92"><rect width="92" height="92" fill="#efefee"/><clipPath id="photo"><rect x="8" y="7" width="77" height="78" rx="13"/></clipPath><g clip-path="url(#photo)"><rect width="92" height="50" fill="#9fbcea"/><path fill="#b9cdf0" d="M0 36H92V50H0Z"/><rect y="49" width="92" height="50" fill="#232c5c"/><path fill="#e9eef4" d="M8 66L16 63 26 68 40 65 50 70 36 72 22 71 8 72Z"/><path fill="#2f4a7c" d="M8 72H50V80H8Z"/><path fill="#8b7a58" d="M8 84L16 78 26 76 36 82 42 92H8Z"/></g></svg><svg class="loupe" width="56" height="54" viewBox="0 0 56 54"><path fill="#bfc5c9" d="M8 18H48L55 46Q54 53 28 53T1 46Z"/><path fill="#eceeef" d="M14 20H42L47 42Q40 47 28 47T9 42Z"/><path fill="#a3acb4" d="M20 27L28 24 32 32 24 36ZM16 38L24 36 26 42 18 43ZM32 36L40 34 40 42 32 42Z"/><path fill="#131313" d="M8 5Q8 0 28 0T48 5V18Q46 22 28 22T8 18Z"/><ellipse cx="28" cy="5" rx="19" ry="4" fill="#333"/></svg></button>
    </div>
    <span class="dock-divider"></span>
    <div class="dock-files">
      <button class="file" aria-label="Downloads"><svg width="96" height="90" viewBox="0 0 96 90"><path fill="#f2f2f2" d="M18 1H61L78 18V30H18Z"/><path fill="#d4d4d4" d="M61 1V18H78Z"/><path fill="#5ba5dc" d="M5 19Q5 15 10 15H28Q31 15 33 18T38 22H86Q91 22 91 27V34H5Z"/><path fill="#74c0f2" d="M5 28H91V40H5Z"/><rect x="0" y="32" width="96" height="57" fill="#f7f7f7"/><rect x="4" y="36" width="88" height="49" fill="#252525"/><path fill="#343434" d="M4 58Q20 54 34 66V72H4Z"/><path fill="#4d4d4d" d="M70 50Q79 42 90 50L88 68Q82 78 75 70Z"/><path fill="#101010" d="M67 52Q72 36 88 38L92 42V54L90 50Q80 46 72 54ZM70 53H79V60H71ZM82 53H90V60H82ZM60 85Q68 74 76 72L84 76 92 68V85Z"/><g font-family="Roboto" font-weight="700" fill="#f2f2f2" text-anchor="middle"><text x="48" y="52" font-size="6">10,000 KICKS</text><text x="48" y="63" font-size="7">PRACTICED</text><text x="48" y="69" font-size="4">one kick 10,000 times</text></g><circle cx="48" cy="77" r="2.500" fill="none" stroke="#bbb"/></svg></button>
      <button class="file file-code" aria-label="Editor window"><svg width="108" height="72" viewBox="0 0 108 72"><rect width="108" height="72" fill="#0f2030"/><path fill="#182c40" d="M0 0H108V4H0ZM0 4H6V72H0ZM22 31H108V33H22Z"/><g fill="none" stroke-width="1.400" opacity=".6"><path stroke="#6c8a50" d="M30 8H56M34 11H60M38 14H66M36 17H62M38 20H56M38 23H52"/><path stroke="#5e7fa3" d="M32 27H66M34 30H80M38 35H60M42 40H70M42 43H82M40 48H72M44 53H90M40 56H66M44 61H68M44 64H64"/><path stroke="#a0713f" d="M9 12H14M9 16H15M9 20H14M9 25H15M9 30H14M9 35H15M9 40H14M9 46H15M9 52H14"/></g></svg><span class="badge"><svg width="26" height="26"><use href="#vscode"/></svg></span></button>
      <button class="file" aria-label="Trash"><svg width="82" height="106" viewBox="0 0 82 106"><path fill="url(#g-trash)" d="M0 14Q10 24 41 24T81 14L72 96Q68 105 41 105T12 96Z"/><path fill="#5c6164" d="M0 14Q4 9 20 8H64Q78 9 81 14Q70 24 41 24T0 14Z"/><path fill="#ebebeb" d="M8 10L22 2 34 6 40 14 48 2 62 6 72 10 74 20Q60 26 41 25T14 22Z"/><path fill="#8f9499" d="M14 20L24 8 26 22ZM34 10L42 24 36 24ZM60 8L70 20 62 22Z"/><path fill="#3fae9c" d="M26 12L38 10 36 15 30 16Z"/><path fill="#5a3530" d="M17 18L28 16 30 22 22 23Z"/><path fill="#3d5a9a" d="M49 8L57 14 53 20 46 16Z"/><path fill="#c7562f" d="M50 19L60 15 58 22 47 23Z"/></svg></button>
    </div>
  </div>
</div>
</body>
</html>
```
FILE: styles.css
```css
* { box-sizing: border-box; }

body {
  margin: 0;
  background: #111;
  font-family: Inter, "Liberation Sans", sans-serif;
  color: #fff;
}

button {
  margin: 0;
  padding: 0;
  border: 0;
  background: none;
  color: inherit;
  font: inherit;
}

svg { display: block; flex: none; }
.defs { position: absolute; }

.desktop {
  position: relative;
  isolation: isolate;
  display: flex;
  flex-direction: column;
  min-height: 100vh;
  padding-bottom: 10px;
  overflow: hidden;
  background: linear-gradient(95deg, #404040 0%, #383838 30%, #1c1c1c 62%, #060606 80%, #0a0a0a 88%, #202020 100%);
}

/* light window that peeks out behind the browser */
.back-window {
  position: absolute;
  z-index: -1;
  top: 90px;
  right: 8px;
  bottom: 157px;
  left: 8px;
  border-radius: 20px;
  background: linear-gradient(90deg, #a9a9a8, #7d7d7d 12%, #6a6a6a 92%, #999 100%);
  box-shadow: 0 10px 50px rgba(0, 0, 0, .7);
}

/* menu bar */
.menubar {
  display: flex;
  align-items: center;
  justify-content: space-between;
  height: 48px;
  margin-bottom: 2px;
  padding: 0 38px 0 37px;
  background: linear-gradient(90deg, #3d3d3d, #363636 35%, #232323 60%, #0e0e0e 85%, #080808);
  font-size: 25px;
  font-weight: 500;
}
.menus { display: flex; align-items: center; gap: 42px; }
.menu { white-space: nowrap; }
.menu-app { font-weight: 700; }
.status { display: flex; align-items: center; gap: 37px; }
.clock { display: flex; gap: 22px; margin-left: -4px; font-size: 26px; white-space: nowrap; }

/* browser window */
.browser {
  flex: 1;
  display: flex;
  flex-direction: column;
  margin: 0 2px 0 16px;
  border-radius: 22px;
  overflow: hidden;
  background: #201f24;
  box-shadow: 0 0 0 2px #050505;
  z-index: 1;
}

.tabstrip {
  display: flex;
  align-items: center;
  height: 80px;
  border-top: 2px solid #6a6a6e;
  border-radius: 22px 22px 0 0;
  padding: 0 24px 0 42px;
  font-size: 24px;
}
.lights { display: flex; gap: 16px; margin-right: 28px; }
.light { width: 24px; height: 24px; border-radius: 50%; }
.light-close { background: #ec6a5e; }
.light-min { background: #f4bf4f; }
.light-max { background: #61c554; }

.pinned { display: flex; gap: 8px; }
.pin {
  display: flex;
  align-items: center;
  justify-content: center;
  width: 64px;
  height: 64px;
  border: 2px solid #39383f;
  border-radius: 16px;
}

.tabs { flex: 1; display: flex; align-items: center; margin-left: 6px; }
.tab {
  display: flex;
  align-items: center;
  gap: 16px;
  width: 220px;
  height: 32px;
  padding-left: 26px;
  border-right: 2px solid #45444b;
  color: #bcbbbf;
  font-size: 23px;
}
.tab:nth-last-of-type(2) { border-right-color: transparent; }
.tab-title {
  white-space: nowrap;
  -webkit-mask-image: linear-gradient(90deg, #000 60%, transparent 104%);
  mask-image: linear-gradient(90deg, #000 60%, transparent 104%);
}
.php-badge {
  flex: none;
  width: 32px;
  height: 32px;
  border-radius: 3px;
  background: #525a93;
  color: #fff;
  font: italic 700 16px/28px "Liberation Sans", sans-serif;
  text-align: center;
}
.tab-active {
  display: flex;
  align-items: center;
  width: 210px;
  height: 64px;
  padding: 0 24px 0 26px;
  border-radius: 16px;
  background: #34333a;
  color: #fff;
  font-size: 23px;
}
.tab-name { flex: 1; margin-left: 18px; }
.icon-btn { display: flex; align-items: center; justify-content: center; flex: none; }
.new-tab { margin-left: 32px; }

.toolbar {
  display: flex;
  align-items: center;
  height: 82px;
  padding: 0 25px 0 36px;
  border-bottom: 2px solid #2c2b30;
  background: #3b3a40;
}
.nav-buttons { display: flex; align-items: center; gap: 44px; width: 425px; }
.nav-buttons .icon-btn:last-child { margin-left: -8px; }
.urlbar {
  display: flex;
  align-items: center;
  flex: 1;
  height: 64px;
  margin: 0 179px 0 33px;
  padding: 0 22px 0 18px;
  border-radius: 16px;
  background: #252429;
}
.url {
  flex: 1;
  min-width: 0;
  margin-left: 30px;
  padding: 0;
  border: 0;
  outline: 0;
  background: none;
  color: #dedde2;
  font: 28px Inter, sans-serif;
}
.url-divider { width: 2px; height: 32px; margin: 0 22px 0 20px; background: #b5b4ba; }
.url-divider + .icon-btn { margin-right: 34px; }
.tools { display: flex; gap: 26px; }
.tools .icon-btn { width: 34px; }
.tools svg { fill: none; stroke: #f1f1f4; stroke-width: 2.600; stroke-linejoin: round; }

/* web page */
.page {
  flex: 1;
  display: flex;
  font-family: "Liberation Sans", Arial, sans-serif;
  font-size: 32px;
  line-height: 48px;
}
.sidebar {
  flex: none;
  width: 500px;
  padding: 50px 38px 0 40px;
  border-right: 2px solid #d9d9d9;
  background: linear-gradient(0deg, #f2f2f2, #fff 60px);
  color: #000;
}
.brand {
  margin: 0;
  padding: 30px;
  border-radius: 16px;
  background: #f4f4f4;
  font-size: 48px;
  line-height: 72px;
}
.links { display: flex; flex-direction: column; gap: 2px; margin-top: 76px; }
.links a { padding: 24px 20px; color: #000; text-decoration: none; }

.main {
  flex: 1;
  padding: 40px 38px 0 140px;
  background:
    linear-gradient(0deg, rgba(0, 0, 0, .06), transparent 60px),
    linear-gradient(52deg, #cfd0cf 0%, #bfc0c0 11%, #b1b2b3 20%, #a3a4a5 31%, #979899 43%, #929394 70%, #8f9091 100%);
  color: #24282c;
}
.alert {
  padding: 32px;
  border: 2px solid #e6abb0;
  border-radius: 12px;
  background: #f3d7d9;
  color: #9f2f38;
}
.hero { padding: 328px 136px 0 80px; }
.hero-title {
  margin: 0 0 96px;
  color: #fff;
  font-size: 80px;
  line-height: 96px;
  text-align: center;
  text-shadow: 4px 4px 16px rgba(0, 0, 0, .3);
}
.card {
  height: 128px;
  border-radius: 40px;
  background: #fafbfb;
  box-shadow: 0 16px 60px rgba(0, 0, 0, .25);
}

/* status bar of the editor behind the browser */
.editor-bar {
  display: flex;
  align-items: center;
  justify-content: space-between;
  height: 38px;
  margin: -20px 178px 0 302px;
  padding: 0 34px 0 24px;
  border-radius: 0 0 16px 16px;
  background: #070c13;
  color: #42536b;
  font-size: 24px;
  white-space: nowrap;
}
.editor-bar svg { fill: none; stroke: #42536b; stroke-width: 2; }
.editor-group { display: flex; align-items: center; gap: 32px; }
.editor-group:first-child { gap: 29px; }
.ed-remote { margin-right: 11px; }
.ed-item { display: flex; align-items: center; gap: 13px; }
.ed-counts { display: flex; align-items: center; gap: 9px; }

/* dock */
.dock {
  display: flex;
  height: 144px;
  margin: 0 105px;
  padding: 0 16px 0 18px;
  border: 2px solid #555;
  border-radius: 42px;
  background: linear-gradient(90deg, #343434, #383838 42%, #1a1a1a 66%, #222 85%, #2c2c2c);
  box-shadow: 0 0 0 1px #111;
  z-index: 2;
}
.dock-apps { display: flex; flex: none; justify-content: space-between; width: 1792px; padding-top: 19px; }
.dock-recent { width: 336px; }
.app {
  position: relative;
  width: 92px;
  height: 92px;
}
.running::after {
  content: "";
  position: absolute;
  left: 42px;
  top: 111px;
  width: 8px;
  height: 8px;
  border-radius: 50%;
  background: #b5b5b5;
}
.tile {
  display: block;
  width: 92px;
  height: 92px;
  border-radius: 22px;
  overflow: hidden;
}
.tile-green { background: linear-gradient(#86ef80, #57bb48); }
.tile-store { background: linear-gradient(#50b0ec, #2a58d6); }
.tile-gear { background: linear-gradient(#d5dee4, #8d8b88); }
.petals rect { mix-blend-mode: multiply; opacity: .9; }
.calendar { background: #fafaf8; text-align: center; }
.cal-month {
  display: block;
  height: 28px;
  background: #e0604f;
  color: #fff;
  font-size: 18px;
  font-weight: 600;
  line-height: 30px;
}
.cal-day {
  display: block;
  color: #222;
  font-family: Roboto, sans-serif;
  font-size: 56px;
  font-weight: 300;
  line-height: 62px;
}
.pen { position: absolute; left: 32px; top: -10px; }
.loupe { position: absolute; left: 40px; top: 44px; }
.dock-divider { flex: none; width: 2px; height: 108px; margin: 16px 40px 0 42px; background: #5a5a5a; }
.dock-files { display: flex; flex: none; gap: 23px; margin-left: -4px; padding-top: 9px; }
.file { align-self: flex-start; }
.file-code { position: relative; margin-top: 21px; }
.badge {
  position: absolute;
  right: 2px;
  bottom: -16px;
  display: flex;
  align-items: center;
  justify-content: center;
  width: 36px;
  height: 36px;
  border-radius: 8px;
  background: #fff;
}
```
